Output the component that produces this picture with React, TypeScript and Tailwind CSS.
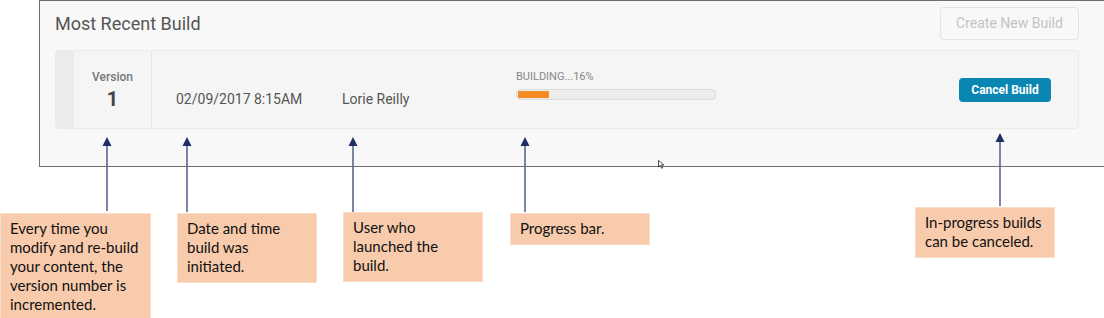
import React from "react"

const ui = { fontFamily: "Roboto, 'Liberation Sans', sans-serif" }
const note = { fontFamily: "Lato, Carlito, 'Liberation Sans', sans-serif" }

// annotation arrow pointing up at the UI
function Arrow({ x, top, bottom }: { x: number; top: number; bottom: number }) {
  const h = bottom - top
  return (
    <svg
      className="absolute"
      style={{ left: x - 6, top }}
      width={12}
      height={h}
      viewBox={`0 0 12 ${h}`}
    >
      <line x1={6} y1={6} x2={6} y2={h} stroke="#5b6891" strokeWidth={1.6} />
      <polygon points={`6,0 1.5,9 10.5,9`} fill="#1f2e63" />
    </svg>
  )
}

function Callout({ x, y, w, lines }: { x: number; y: number; w: number; lines: string[] }) {
  return (
    <div
      className="absolute bg-[#f8cbad] border border-[#fbdcc6] pl-[9px] pt-[5px] pb-[6px] text-[15px] leading-[19px] text-[#111]"
      style={{ left: x, top: y, width: w, ...note }}
    >
      {lines.map((l) => (
        <div key={l} className="whitespace-nowrap">{l}</div>
      ))}
    </div>
  )
}

function BuildCard() {
  return (
    <div className="flex h-[79px] rounded border border-[#ebebeb] bg-[#f5f5f5] overflow-hidden">
      <div className="w-[18px] bg-[#ebebeb]" />
      <div className="w-[78px] border-r border-[#e6e6e6] flex flex-col items-center pt-[18px]">
        <span className="text-[12px] font-medium text-[#777] leading-[16px]">Version</span>
        <span className="text-[20px] font-bold text-[#444] leading-[24px] mt-[2px]">1</span>
      </div>
      <div className="flex flex-1 items-center">
        <span className="ml-[24px] mt-[19px] w-[166px] text-[14px] text-[#555]">02/09/2017 8:15AM</span>
        <span className="mt-[19px] w-[174px] text-[14px] text-[#555]">Lorie Reilly</span>
        <div className="flex flex-col mt-[-10px]">
          <span className="text-[11px] text-[#888] leading-[14px]">BUILDING...16%</span>
          <div className="mt-[5px] w-[200px] h-[11px] rounded-sm border border-[#dcdcdc] bg-[#ececec] p-px">
            <div className="h-full bg-[#f68b1f] rounded-[1px]" style={{ width: "16%" }} />
          </div>
        </div>
        <div className="flex-1" />
        <button className="mr-[27px] w-[92px] h-[24px] rounded bg-[#0a86b3] text-white text-[12px] font-bold">
          Cancel Build
        </button>
      </div>
    </div>
  )
}

export default function App() {
  return (
    <div className="relative w-[1104px] h-[318px] overflow-hidden bg-white" style={ui}>
      <div className="ml-[39px] w-[1080px] h-[167px] border border-[#6f6f6f] bg-[#f8f8f8] pl-[15px] pr-[39px] pt-[5px]">
        <div className="flex items-center justify-between h-[34px]">
          <h2 className="text-[18px] text-[#555] mt-[1px]">Most Recent Build</h2>
          <button className="w-[139px] h-[33px] rounded border border-[#e3e3e3] text-[14px] text-[#c4c4c4]">
            Create New Build
          </button>
        </div>
        <div className="mt-[10px]">
          <BuildCard />
        </div>
      </div>

      {/* mouse pointer */}
      <svg className="absolute" style={{ left: 658, top: 160 }} width={7} height={9} viewBox="0 0 7 9">
        <path d="M0.5 0.5 L0.5 7 L2.3 5.4 L3.6 8.3 L4.6 7.8 L3.4 5 L5.8 5 Z" fill="#fff" stroke="#222" strokeWidth={0.8} />
      </svg>

      <Arrow x={107} top={137} bottom={211} />
      <Arrow x={187} top={137} bottom={212} />
      <Arrow x={353} top={137} bottom={212} />
      <Arrow x={525} top={137} bottom={212} />
      <Arrow x={1000} top={133} bottom={206} />

      <Callout
        x={0}
        y={213}
        w={151}
        lines={["Every time you", "modify and re-build", "your content, the", "version number is", "incremented."]}
      />
      <Callout x={177} y={213} w={140} lines={["Date and time", "build was", "initiated."]} />
      <Callout x={343} y={212} w={140} lines={["User who", "launched the", "build."]} />
      <Callout x={510} y={213} w={140} lines={["Progress bar."]} />
      <Callout x={915} y={207} w={140} lines={["In-progress builds", "can be canceled."]} />
    </div>
  )
}
